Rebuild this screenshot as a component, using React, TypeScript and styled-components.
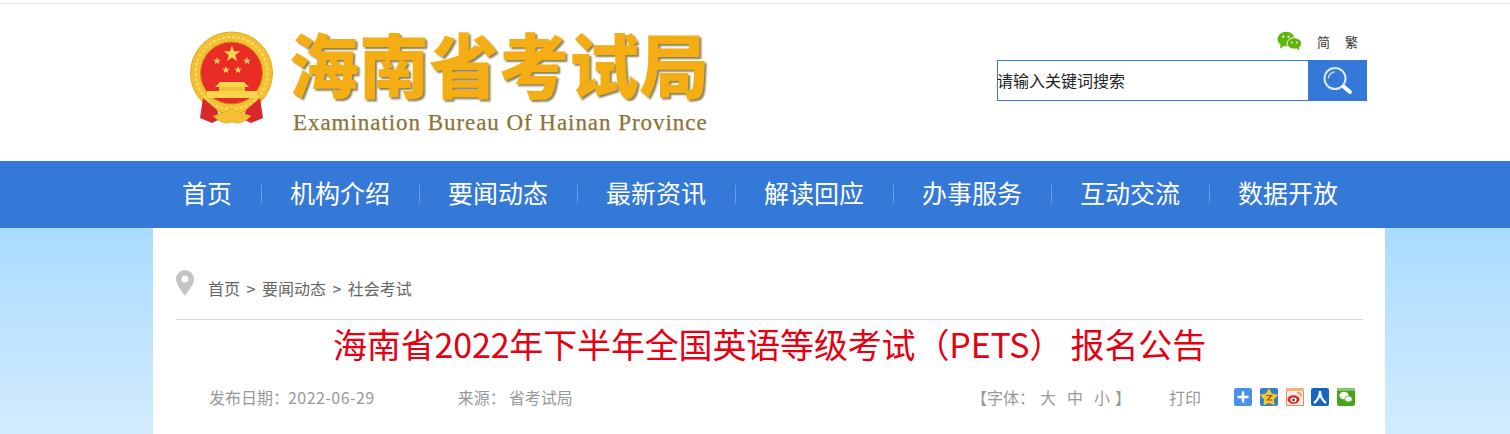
import styled, { createGlobalStyle } from "styled-components";

const Global = createGlobalStyle`
  html, body {
    margin: 0;
    padding: 0;
    height: 434px;
    overflow: hidden;
    background: #fff;
    font-family: "Noto Sans CJK SC", "Liberation Sans", sans-serif;
  }
`;

const Page = styled.div`
  width: 1510px;
  height: 434px;
  overflow: hidden;
`;
const Header = styled.div`
  height: 157px;
  border-top: 1px solid #e4e4e4;
  margin-top: 3px;
  display: flex;
  justify-content: space-between;
  padding: 0 143px 0 189px;
`;
const Logo = styled.div`
  display: flex;
  gap: 18px;
  padding-top: 27px;
`;
const LogoText = styled.div`
  display: flex;
  flex-direction: column;
`;
const LogoTitle = styled.div`
  font-size: 70px;
  line-height: 64px;
  font-weight: 900;
  color: #f5ad14;
  text-shadow: 2px 2px 2px #8d8255;
  white-space: nowrap;
  margin-left: -2px;
`;
const LogoSub = styled.div`
  font-family: "Liberation Serif", serif;
  font-size: 23px;
  line-height: 24px;
  margin: 16px 0 0 2px;
  letter-spacing: 0.95px;
  -webkit-text-stroke: 0.25px #8b7436;
  color: #8b7436;
  white-space: nowrap;
`;
const Tools = styled.div`
  width: 370px;
  padding-top: 22px;
`;
const Lang = styled.div`
  height: 30px;
  margin-bottom: 4px;
  display: flex;
  justify-content: flex-end;
  align-items: center;
  gap: 15px;
  padding-right: 9px;
  font-size: 13px;
  color: #333;
`;
const Search = styled.div`
  display: flex;
  height: 41px;
`;
const SearchInput = styled.div`
  flex: 1;
  box-sizing: border-box;
  border: 1px solid #3579d8;
  font-size: 16px;
  line-height: 39px;
  text-indent: -1px;
  color: #222;
`;
const SearchButton = styled.div`
  width: 58px;
  background: #3579d8;
  display: flex;
  align-items: center;
  justify-content: center;
`;
const Nav = styled.div`
  height: 67px;
  box-sizing: border-box;
  background: #3579d8;
  display: flex;
  align-items: flex-start;
  padding: 15px 0 0 153px;
`;
const NavItem = styled.div<{ $first?: boolean }>`
  font-size: 25px;
  color: #fff;
  line-height: 33px;
  padding: 0 29px;
  position: relative;
  white-space: nowrap;
  &::before {
    content: "";
    display: ${(p) => (p.$first ? "none" : "block")};
    position: absolute;
    left: 0;
    top: 9px;
    height: 18px;
    width: 1px;
    background: #6a9de4;
  }
`;
const Body = styled.div`
  height: 206px;
  background: linear-gradient(#a9dcff, #d3ebfe);
  padding-left: 153px;
`;
const Card = styled.div`
  width: 1232px;
  height: 100%;
  box-sizing: border-box;
  background: #fff;
  padding: 0 22px 0 23px;
`;
const Crumbs = styled.div`
  height: 92px;
  box-sizing: border-box;
  border-bottom: 1px solid #d9d9d9;
  display: flex;
  align-items: flex-start;
  padding-top: 42px;
`;
const Pin = styled.svg`
  margin-right: 14px;
  flex: none;
`;
const CrumbText = styled.div`
  font-size: 16px;
  line-height: 22px;
  margin-top: 7px;
  color: #666;
  display: flex;
  gap: 6.5px;
`;
const Title = styled.h1`
  margin: 0;
  font-size: 34px;
  line-height: 48px;
  letter-spacing: -0.16px;
  font-weight: 400;
  color: #e60012;
  text-align: center;
  white-space: nowrap;
`;
const Meta = styled.div`
  display: flex;
  align-items: center;
  justify-content: space-between;
  padding: 0 8px 0 33px;
  margin-top: 18px;
  font-size: 16px;
  line-height: 22px;
  color: #999;
`;
const MetaLeft = styled.div`
  display: flex;
  align-items: center;
  gap: 83px;
`;
const MetaRight = styled.div`
  display: flex;
  align-items: center;
`;
const DateValue = styled.span`
  letter-spacing: 0.45px;
  margin-left: -1px;
`;
const Source = styled.span`
  display: flex;
  gap: 3px;
`;
const FontPick = styled.div`
  display: flex;
  align-items: center;
`;
const FontSizes = styled.div`
  display: flex;
  gap: 11px;
  margin: 0 5px;
`;
const PrintLink = styled.span`
  margin-left: 38px;
`;
const Share = styled.div`
  display: flex;
  gap: 7.75px;
  margin-left: 33px;
`;
const ShareIcon = styled.svg`
  display: block;
`;

const navItems = ["首页", "机构介绍", "要闻动态", "最新资讯", "解读回应", "办事服务", "互动交流", "数据开放"];

const star = (cx: number, cy: number, r: number, ratio = 0.4) => {
  const pts: string[] = [];
  for (let i = 0; i < 10; i++) {
    const a = -Math.PI / 2 + (i * Math.PI) / 5;
    const d = i % 2 === 0 ? r : r * ratio;
    pts.push(`${(cx + d * Math.cos(a)).toFixed(2)},${(cy + d * Math.sin(a)).toFixed(2)}`);
  }
  return pts.join(" ");
};

const Emblem = () => (
  <svg width="84" height="96" viewBox="0 -3 84 96">
    <circle cx="42.5" cy="39" r="41" fill="#f3c033" stroke="#e5a81f" strokeWidth="1" />
    <circle cx="42.5" cy="39" r="36" fill="none" stroke="#fbdc6a" strokeWidth="2" strokeDasharray="3 2" />
    <circle cx="42.5" cy="39" r="31" fill="#ea2c27" stroke="#c98f16" strokeWidth="1" />
    <polygon points={star(43, 20, 8.5)} fill="#f8d64e" />
    <polygon points={star(28, 27, 4)} fill="#f8d64e" />
    <polygon points={star(58, 27, 4)} fill="#f8d64e" />
    <polygon points={star(37, 36, 4)} fill="#f8d64e" />
    <polygon points={star(49, 36, 4)} fill="#f8d64e" />
    <path d="M26 53 L60 53 L55 48 L31 48 Z" fill="#f8d64e" />
    <rect x="30" y="53" width="26" height="4" fill="#f3c033" />
    <rect x="18" y="57" width="50" height="7" fill="#f8d64e" />
    <path d="M14 64 L11 84 L23 89 L31 85 L28 76 Z" fill="#d9272c" />
    <path d="M71 64 L74 84 L62 89 L54 85 L57 76 Z" fill="#d9272c" />
    <path d="M24 82 Q34 79 39 77 Q43 72 47 77 Q52 79 62 82 Q52 92 43 88 Q34 92 24 82 Z" fill="#f3c033" stroke="#d9a11c" strokeWidth="0.6" />
  </svg>
);

const App = () => (
  <Page>
    <Global />
    <Header>
      <Logo>
        <Emblem />
        <LogoText>
          <LogoTitle>海南省考试局</LogoTitle>
          <LogoSub>Examination Bureau Of Hainan Province</LogoSub>
        </LogoText>
      </Logo>
      <Tools>
        <Lang>
          <svg width="25" height="20" viewBox="0 0 26 20">
            <ellipse cx="9.5" cy="8" rx="9" ry="7.5" fill="#5cb70a" />
            <path d="M4 13 L3 18 L9 14 Z" fill="#5cb70a" />
            <ellipse cx="18" cy="12.5" rx="7.5" ry="6" fill="#5cb70a" stroke="#fff" strokeWidth="1" />
            <path d="M20 17 L23 20 L23 15 Z" fill="#5cb70a" />
            <circle cx="6.5" cy="5.5" r="1.2" fill="#fff" />
            <circle cx="12" cy="5.5" r="1.2" fill="#fff" />
            <circle cx="15.5" cy="11.5" r="1" fill="#fff" />
            <circle cx="20.5" cy="11.5" r="1" fill="#fff" />
          </svg>
          <span>简</span>
          <span>繁</span>
        </Lang>
        <Search>
          <SearchInput>请输入关键词搜索</SearchInput>
          <SearchButton>
            <svg width="30" height="30" viewBox="0 0 30 30" fill="none">
              <circle cx="12" cy="12.5" r="10.5" stroke="#dce8f8" strokeWidth="2" />
              <path d="M5.5 12.5a6.5 6.5 0 0 1 6.5 -6.5" stroke="#bcd3f3" strokeWidth="1.5" />
              <path d="M20.5 20.5 L27 26" stroke="#fff" strokeWidth="4" strokeLinecap="round" />
            </svg>
          </SearchButton>
        </Search>
      </Tools>
    </Header>
    <Nav>
      {navItems.map((t, i) => (
        <NavItem key={t} $first={i === 0}>{t}</NavItem>
      ))}
    </Nav>
    <Body>
      <Card>
        <Crumbs>
          <Pin width="18" height="26" viewBox="0 0 18 26">
            <path fillRule="evenodd" d="M9 0a9 9 0 0 1 9 9c0 6-6 12-9 17C6 21 0 15 0 9a9 9 0 0 1 9-9Zm0 5.5a3.5 3.5 0 1 0 0 7 3.5 3.5 0 0 0 0-7Z" fill="#c4c4c4" />
          </Pin>
          <CrumbText>
            <span>首页</span><span>&gt;</span><span>要闻动态</span><span>&gt;</span><span>社会考试</span>
          </CrumbText>
        </Crumbs>
        <Title>海南省2022年下半年全国英语等级考试（PETS） 报名公告</Title>
        <Meta>
          <MetaLeft>
            <span>发布日期：<DateValue>2022-06-29</DateValue></span>
            <Source><span>来源：</span><span>省考试局</span></Source>
          </MetaLeft>
          <MetaRight>
            <FontPick>
              <span>【字体：</span>
              <FontSizes><span>大</span><span>中</span><span>小</span></FontSizes>
              <span>】</span>
            </FontPick>
            <PrintLink>打印</PrintLink>
            <Share>
              <ShareIcon width="18" height="18" viewBox="0 0 18 18">
                <rect width="18" height="18" rx="2" fill="#4a90e8" />
                <path d="M9 3.5v11M3.5 9h11" stroke="#fff" strokeWidth="2.4" />
              </ShareIcon>
              <ShareIcon width="18" height="18" viewBox="0 0 18 18">
                <rect width="18" height="18" rx="2" fill="#2d7fd0" />
                <polygon points={star(9, 9.8, 9.5, 0.55)} fill="#f6c32c" />
                <path d="M6.5 7.5h5l-4 4.5h5" stroke="#8a5a10" strokeWidth="1.2" fill="none" />
              </ShareIcon>
              <ShareIcon width="18" height="18" viewBox="0 0 18 18">
                <rect x="0.5" y="0.5" width="17" height="17" fill="#f6efe6" stroke="#f08a5a" />
                <rect width="18" height="3" fill="#f6b07a" />
                <ellipse cx="7.5" cy="11.5" rx="6" ry="4.2" fill="#e0262c" />
                <ellipse cx="7.5" cy="11.8" rx="3" ry="2.4" fill="#fff" />
                <circle cx="7.5" cy="12" r="1.2" fill="#222" />
                <path d="M11 4.5a3.8 3.8 0 0 1 4 4" stroke="#f0902a" strokeWidth="1.6" fill="none" />
              </ShareIcon>
              <ShareIcon width="18" height="18" viewBox="0 0 18 18">
                <rect width="18" height="18" rx="2" fill="#1666bd" />
                <path d="M9 3C9 8 7 12 3 15M9 3C9 8 11 12 15 15" stroke="#fff" strokeWidth="2.2" fill="none" />
              </ShareIcon>
              <ShareIcon width="18" height="18" viewBox="0 0 18 18">
                <rect width="18" height="18" rx="2" fill="#45a31b" />
                <rect width="18" height="3" rx="1.5" fill="#86c56a" />
                <ellipse cx="7" cy="7.5" rx="4.6" ry="3.8" fill="#fff" />
                <ellipse cx="11.5" cy="11" rx="3.8" ry="3" fill="#fff" stroke="#45a31b" strokeWidth="0.7" />
              </ShareIcon>
            </Share>
          </MetaRight>
        </Meta>
      </Card>
    </Body>
  </Page>
);

export default App;
